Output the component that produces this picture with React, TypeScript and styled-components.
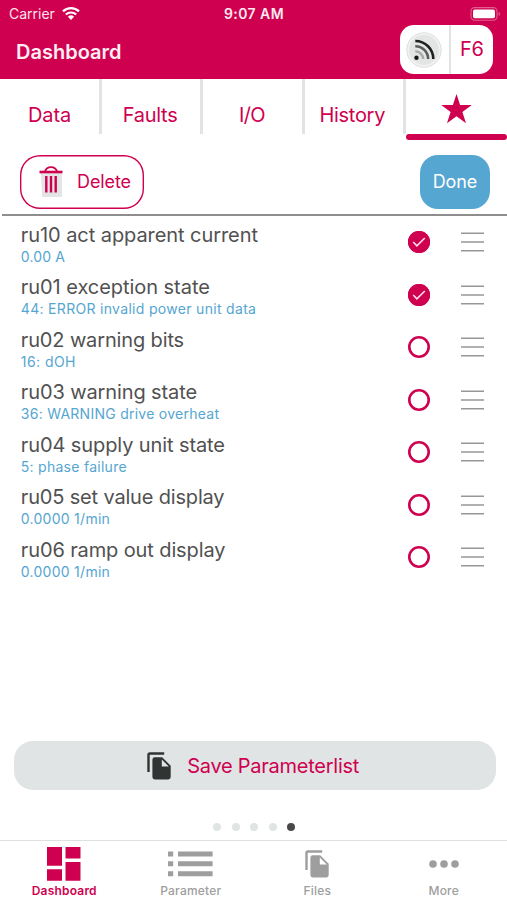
import React from "react";
import styled, { createGlobalStyle } from "styled-components";

const crimson = "#cf004f";
const blue = "#55a6d1";
const mist = "#e0e4e5";

const GlobalStyle = createGlobalStyle`
  * { box-sizing: border-box; }
  body { margin: 0; background: #fff; }
  button { font: inherit; color: inherit; background: none; border: 0; padding: 0; margin: 0; }
  svg { display: block; flex: none; }
`;

const Screen = styled.div`
  width: 507px;
  height: 900px;
  display: flex;
  flex-direction: column;
  overflow: hidden;
  background: #fff;
  font-family: Inter, "Liberation Sans", sans-serif;
`;

const Label = styled.span<{ $track?: number }>`
  white-space: pre;
  letter-spacing: ${(p) => p.$track ?? 0}px;
`;

const Header = styled.header`
  height: 79px;
  background: ${crimson};
  color: #fff;
`;

const StatusBar = styled.div`
  height: 25px;
  padding: 1px 6px 0 9px;
  display: grid;
  grid-template-columns: 1fr auto 1fr;
  align-items: center;
  font-size: 14px;
  line-height: 26px;
`;

const Carrier = styled.div`
  display: flex;
  align-items: center;
  gap: 7px;
  color: #ffe3ee;
`;

const Clock = styled.div`
  margin-left: -2px;
  font-weight: 600;
  color: #ffe9f1;
`;

const BatterySlot = styled.div`
  display: flex;
  justify-content: flex-end;
  padding-bottom: 1px;
`;

const TitleBar = styled.div`
  height: 49px;
  padding: 0 14.5px 0 16px;
  display: flex;
  justify-content: space-between;
`;

const Title = styled.h1`
  margin: 3px 0 0;
  font-size: 20px;
  font-weight: 600;
  line-height: 49px;
  color: #ffedf4;
`;

const ConnectionPill = styled.div`
  width: 93px;
  height: 49px;
  display: flex;
  border-radius: 14px;
  background: #fff;
  color: ${crimson};
`;

const SignalCell = styled.div`
  width: 51.5px;
  display: flex;
  align-items: center;
  justify-content: center;
  border-right: 2px solid ${mist};
`;

const ModeCell = styled.div`
  flex: 1;
  text-align: center;
  font-size: 20px;
  line-height: 49px;
`;

const Tabs = styled.nav`
  height: 61px;
  display: flex;
`;

const Tab = styled.button<{ $inset: number }>`
  width: 101.5px;
  height: 55px;
  padding: 17px 0 0 ${(p) => p.$inset}px;
  border-right: 3px solid ${mist};
  color: ${crimson};
  font-size: 20px;
  line-height: 38px;
  text-align: left;
`;

const ActiveTab = styled.button`
  flex: 1;
  height: 61px;
  display: flex;
  flex-direction: column;
  align-items: center;
  justify-content: space-between;
  padding-top: 15px;
`;

const StarSlot = styled.span`
  padding-right: 1px;
`;

const TabUnderline = styled.span`
  width: 100%;
  height: 6px;
  border-radius: 3px;
  background: ${crimson};
`;

const Toolbar = styled.div`
  height: 76px;
  margin-left: 2px;
  padding: 14.5px 17px 0 18px;
  display: flex;
  justify-content: space-between;
  border-bottom: 2px solid #8e8e8e;
`;

const DeleteButton = styled.button`
  width: 124px;
  height: 54.5px;
  padding-left: 19px;
  display: flex;
  align-items: center;
  gap: 13px;
  box-shadow: inset 0 0 0 1.4px ${crimson};
  border-radius: 20px;
  color: ${crimson};
  font-size: 18px;
`;

const DoneButton = styled.button`
  width: 70px;
  height: 54px;
  border-radius: 18px;
  background: ${blue};
  color: #fff;
  font-size: 18px;
`;

const List = styled.ul`
  flex: 1;
  margin: 0;
  padding: 0;
  list-style: none;
`;

const ListRow = styled.li`
  height: 52.5px;
  padding: 0 23.5px 0 20.8px;
  display: flex;
  align-items: center;
`;

const RowText = styled.div`
  flex: 1;
  padding-top: 4px;
  display: flex;
  flex-direction: column;
`;

const RowName = styled(Label)`
  font-size: 20px;
  line-height: 24px;
  color: #515151;
`;

const RowValue = styled(Label)`
  font-size: 14px;
  line-height: 19px;
  color: ${blue};
`;

const Mark = styled.span<{ $checked: boolean }>`
  width: 22px;
  height: 22px;
  margin-right: 30.3px;
  display: flex;
  align-items: center;
  justify-content: center;
  box-shadow: inset 0 0 0 2.6px ${crimson};
  border-radius: 50%;
  background: ${(p) => (p.$checked ? crimson : "transparent")};
`;

const SaveButton = styled.button`
  height: 49px;
  margin: 0 11.5px 0 14.3px;
  padding-right: 4px;
  display: flex;
  align-items: center;
  justify-content: center;
  gap: 16.5px;
  border-radius: 19px;
  background: ${mist};
  color: ${crimson};
  font-size: 20px;
`;

const Pager = styled.div`
  height: 50px;
  padding: 32.5px 0 0 213.4px;
  display: flex;
  gap: 10.4px;
`;

const PagerDot = styled.span<{ $active: boolean }>`
  width: 8px;
  height: 8px;
  border-radius: 50%;
  background: ${(p) => (p.$active ? "#494949" : mist)};
`;

const BottomNav = styled.nav`
  height: 60px;
  padding-left: 1px;
  display: grid;
  grid-template-columns: repeat(4, 126.5px);
  border-top: 1px solid #dfe1e1;
`;

const NavItem = styled.button<{ $active: boolean }>`
  display: flex;
  flex-direction: column;
  align-items: center;
  color: ${(p) => (p.$active ? crimson : "#9e9e9e")};
  font-size: 12px;
  font-weight: ${(p) => (p.$active ? 600 : 500)};
  line-height: 16px;
`;

const NavIcon = styled.span`
  height: 42px;
  padding-top: 3px;
  display: flex;
  align-items: center;
`;

const WifiIcon = () => (
  <svg width="18" height="14" viewBox="0 0 18 14" fill="none" stroke="#fff">
    <path d="M1 4.4a11.6 11.6 0 0 1 16 0" strokeWidth="2.3" />
    <path d="M3.8 7.5a7.6 7.6 0 0 1 10.4 0" strokeWidth="2.1" />
    <path d="M9 13 5.9 9.8a4.5 4.5 0 0 1 6.2 0Z" fill="#fff" stroke="none" />
  </svg>
);

const BatteryIcon = () => (
  <svg width="31" height="14" viewBox="0 0 31 14" fill="none">
    <rect x="1" y="0.6" width="26" height="12.6" rx="3.6" stroke="#e25f92" strokeWidth="1.1" />
    <rect x="3" y="2.6" width="22" height="8.6" rx="1.8" fill="#fff" />
    <path d="M28.6 4.8q1.5.7 1.5 2.1t-1.5 2.1z" fill="#e25f92" />
  </svg>
);

const SignalIcon = () => (
  <svg width="36" height="36" viewBox="0 0 36 36" fill="none">
    <circle cx="18" cy="18" r="17.2" fill="#f1f2f2" stroke="#dcdede" />
    <circle cx="18" cy="18" r="15" fill="#e3e4e4" />
    <g strokeWidth="2.6">
      <path d="M9.3 9a18 18 0 0 1 18 18" stroke="#202020" />
      <path d="M9.3 14.2a12.8 12.8 0 0 1 12.8 12.8" stroke="#5c5c5c" />
      <path d="M9.3 19.3a7.8 7.8 0 0 1 7.8 7.8" stroke="#aaa" />
    </g>
    <circle cx="10.5" cy="25.8" r="2.2" fill="#161616" />
  </svg>
);

const StarIcon = () => (
  <svg width="31" height="30" viewBox="0 0 31 30">
    <path
      d="M15.5 0 19.1 11.1H30.8L21.4 18 25 29.2 15.5 22.3 6 29.2 9.6 18 .2 11.1H11.9Z"
      fill={crimson}
    />
  </svg>
);

const TrashIcon = () => (
  <svg width="25" height="32" viewBox="0 0 25 32" fill="none">
    <path d="M2 7h21v23q0 1-1 1H4q-1 0-1-1Z" fill="#e3e4e5" />
    <path d="M.5 6h23" stroke={crimson} strokeWidth="2.6" />
    <path d="M6 5.4Q7.4 1.2 12 1.2t6 4.2" stroke={crimson} strokeWidth="1.8" />
    <path d="M7.3 10v16.5M12 10v16.5M16.7 10v16.5" stroke={crimson} strokeWidth="2.4" />
  </svg>
);

const CheckIcon = () => (
  <svg width="14" height="10" viewBox="0 0 14 10" fill="none">
    <path d="m1.2 5 3.7 3.8L12.8 1" stroke="#ffdce8" strokeWidth="1.7" />
  </svg>
);

const DragHandleIcon = () => (
  <svg width="23" height="20" viewBox="0 0 23 20" stroke="#979797" strokeWidth="1.5">
    <path d="M0 1.2h23M0 10h23M0 18.8h23" />
  </svg>
);

const FilesIcon = ({ color }: { color: string }) => (
  <svg width="24" height="28" viewBox="0 0 24 28">
    <path
      d="M17.2.3H2.8A2.5 2.5 0 0 0 .3 2.8V20h2.4V2.7h14.5ZM15.2 5.3H7.8a2.4 2.4 0 0 0-2.4 2.4V25a2.4 2.4 0 0 0 2.4 2.4h13.5a2.4 2.4 0 0 0 2.4-2.4V13.7ZM14.8 14.6V7.4l7 7.2Z"
      fill={color}
      fillRule="evenodd"
    />
  </svg>
);

const DashboardIcon = () => (
  <svg width="34" height="34" viewBox="0 0 34 34" fill="currentColor">
    <path d="M0 0h15v18.7H0zM0 22.2h15V33.8H0zM18.5 0h15v11.6h-15zM18.5 15h15v18.8h-15z" />
  </svg>
);

const ParameterIcon = () => (
  <svg width="45" height="26" viewBox="0 0 45 26" fill="currentColor">
    <path d="M0 .5h5.2v5H0zM10 .5h34.6v5H10zM0 10.3h5.2v5H0zM10 10.3h34.6v5H10zM0 20.2h5.2v5H0zM10 20.2h34.6v5H10z" />
  </svg>
);

const MoreIcon = () => (
  <svg width="30" height="8" viewBox="0 0 30 8" fill="currentColor">
    <circle cx="4" cy="4" r="3.8" />
    <circle cx="15" cy="4" r="3.8" />
    <circle cx="26" cy="4" r="3.8" />
  </svg>
);

const tabs = [
  { name: "Data", inset: 28, track: -0.1 },
  { name: "Faults", inset: 21.3, track: -0.3 },
  { name: "I/O", inset: 36, track: -0.7 },
  { name: "History", inset: 14.9, track: -0.28 },
];

const parameters = [
  { name: "ru10 act apparent current", value: "0.00 A", checked: true, nameTrack: -0.07, valueTrack: 0.12 },
  { name: "ru01 exception state", value: "44: ERROR invalid power unit data", checked: true, nameTrack: -0.05, valueTrack: 0.31 },
  { name: "ru02 warning bits", value: "16: dOH", checked: false, nameTrack: -0.14, valueTrack: 0.45 },
  { name: "ru03 warning state", value: "36: WARNING drive overheat", checked: false, nameTrack: -0.11, valueTrack: 0.26 },
  { name: "ru04 supply unit state", value: "5: phase failure", checked: false, nameTrack: -0.1, valueTrack: 0.27 },
  { name: "ru05 set value display", value: "0.0000 1/min", checked: false, nameTrack: -0.17, valueTrack: 0.27 },
  { name: "ru06 ramp out display", value: "0.0000 1/min", checked: false, nameTrack: -0.12, valueTrack: 0.27 },
];

const navItems = [
  { name: "Dashboard", icon: <DashboardIcon />, active: true },
  { name: "Parameter", icon: <ParameterIcon />, active: false },
  { name: "Files", icon: <FilesIcon color="currentColor" />, active: false },
  { name: "More", icon: <MoreIcon />, active: false },
];

export default function App() {
  return (
    <Screen>
      <GlobalStyle />
      <Header>
        <StatusBar>
          <Carrier>
            <Label>Carrier</Label>
            <WifiIcon />
          </Carrier>
          <Clock>
            <Label $track={0.45}>9:07 AM</Label>
          </Clock>
          <BatterySlot>
            <BatteryIcon />
          </BatterySlot>
        </StatusBar>
        <TitleBar>
          <Title>Dashboard</Title>
          <ConnectionPill>
            <SignalCell>
              <SignalIcon />
            </SignalCell>
            <ModeCell>
              <Label $track={-0.3}>F6</Label>
            </ModeCell>
          </ConnectionPill>
        </TitleBar>
      </Header>

      <Tabs>
        {tabs.map((tab) => (
          <Tab key={tab.name} $inset={tab.inset}>
            <Label $track={tab.track}>{tab.name}</Label>
          </Tab>
        ))}
        <ActiveTab aria-label="Favorites">
          <StarSlot>
            <StarIcon />
          </StarSlot>
          <TabUnderline />
        </ActiveTab>
      </Tabs>

      <Toolbar>
        <DeleteButton>
          <TrashIcon />
          <Label $track={-0.1}>Delete</Label>
        </DeleteButton>
        <DoneButton>
          <Label $track={-0.1}>Done</Label>
        </DoneButton>
      </Toolbar>

      <List>
        {parameters.map((item) => (
          <ListRow key={item.name}>
            <RowText>
              <RowName $track={item.nameTrack}>{item.name}</RowName>
              <RowValue $track={item.valueTrack}>{item.value}</RowValue>
            </RowText>
            <Mark $checked={item.checked}>{item.checked && <CheckIcon />}</Mark>
            <DragHandleIcon />
          </ListRow>
        ))}
      </List>

      <SaveButton>
        <FilesIcon color="#303433" />
        <Label $track={-0.25}>Save Parameterlist</Label>
      </SaveButton>

      <Pager>
        {[0, 1, 2, 3, 4].map((page) => (
          <PagerDot key={page} $active={page === 4} />
        ))}
      </Pager>

      <BottomNav>
        {navItems.map((item) => (
          <NavItem key={item.name} $active={item.active}>
            <NavIcon>{item.icon}</NavIcon>
            <Label $track={0.2}>{item.name}</Label>
          </NavItem>
        ))}
      </BottomNav>
    </Screen>
  );
}
